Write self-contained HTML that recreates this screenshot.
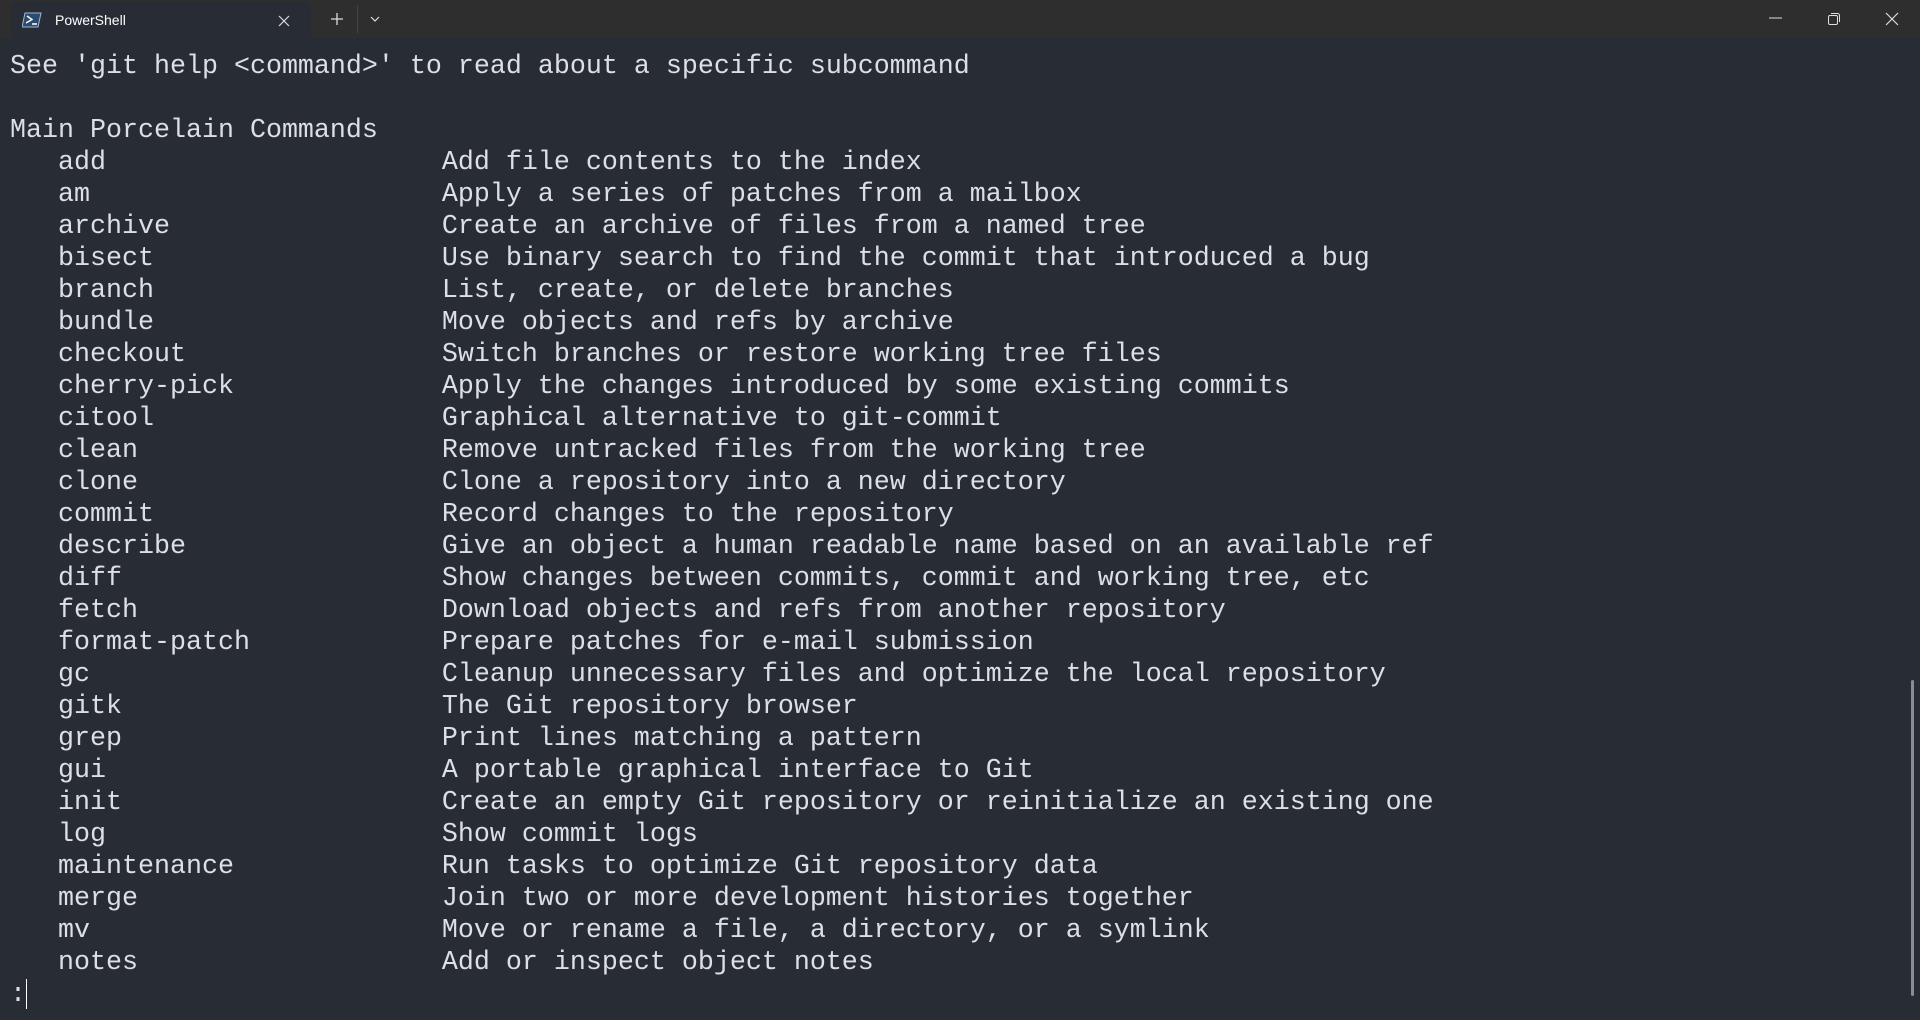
<!DOCTYPE html>
<html><head><meta charset="utf-8"><style>
html,body{margin:0;padding:0;width:1920px;height:1020px;overflow:hidden;background:#282c34;}
#bar{position:absolute;left:0;top:0;width:1920px;height:38px;background:#2e2e2e;}
#tab{position:absolute;left:11px;top:2px;width:300px;height:36px;background:#282c34;border-radius:8px 8px 0 0;}
#tab .t{position:absolute;left:44px;top:10px;font:14px "Liberation Sans",sans-serif;color:#fff;}
pre{position:absolute;left:10px;top:51px;margin:0;font-family:"Liberation Mono",monospace;font-size:26.67px;line-height:32px;color:#dcdfe4;}
#cur{position:absolute;left:26px;top:979px;width:1px;height:30px;background:#fff;}
#sb{position:absolute;left:1911px;top:680px;width:3px;height:316px;background:#8a8d93;border-radius:2px;}
svg{position:absolute;}
</style></head><body>
<div id="bar"></div>
<div id="tab">
<svg style="left:11px;top:10px" width="20" height="16" viewBox="0 0 20 16"><path d="M3 1h16l-3 14H0z" fill="#2b4a6e" stroke="#9fb8d8" stroke-width="1"/><path d="M5 4l5 3.5-6 3.5M10 12h5" stroke="#fff" stroke-width="1.4" fill="none"/></svg>
<span class="t">PowerShell</span>
<svg style="left:267px;top:13px" width="12" height="12" viewBox="0 0 12 12"><path d="M1 1l10 10M11 1L1 11" stroke="#ddd" stroke-width="1.2"/></svg>
</div>
<svg style="left:331px;top:13px" width="12" height="12" viewBox="0 0 12 12"><path d="M6 0v12M0 6h12" stroke="#ddd" stroke-width="1.3"/></svg>
<div style="position:absolute;left:357px;top:5px;width:1px;height:28px;background:#444"></div>
<svg style="left:370px;top:16px" width="10" height="6" viewBox="0 0 10 6"><path d="M1 1l4 4 4-4" stroke="#ddd" stroke-width="1.2" fill="none"/></svg>
<svg style="left:1769px;top:17px" width="13" height="2"><path d="M0 1h13" stroke="#ddd" stroke-width="1"/></svg>
<svg style="left:1827px;top:12px" width="14" height="14" viewBox="0 0 14 14"><rect x="1.5" y="3.5" width="9" height="9" rx="1.5" fill="none" stroke="#ddd"/><path d="M4 1.5h6.5a2 2 0 0 1 2 2V10" fill="none" stroke="#ddd"/></svg>
<svg style="left:1885px;top:12px" width="14" height="14" viewBox="0 0 14 14"><path d="M1 1l12 12M13 1L1 13" stroke="#ddd" stroke-width="1.2"/></svg>
<pre>See 'git help &lt;command&gt;' to read about a specific subcommand

Main Porcelain Commands
   add                     Add file contents to the index
   am                      Apply a series of patches from a mailbox
   archive                 Create an archive of files from a named tree
   bisect                  Use binary search to find the commit that introduced a bug
   branch                  List, create, or delete branches
   bundle                  Move objects and refs by archive
   checkout                Switch branches or restore working tree files
   cherry-pick             Apply the changes introduced by some existing commits
   citool                  Graphical alternative to git-commit
   clean                   Remove untracked files from the working tree
   clone                   Clone a repository into a new directory
   commit                  Record changes to the repository
   describe                Give an object a human readable name based on an available ref
   diff                    Show changes between commits, commit and working tree, etc
   fetch                   Download objects and refs from another repository
   format-patch            Prepare patches for e-mail submission
   gc                      Cleanup unnecessary files and optimize the local repository
   gitk                    The Git repository browser
   grep                    Print lines matching a pattern
   gui                     A portable graphical interface to Git
   init                    Create an empty Git repository or reinitialize an existing one
   log                     Show commit logs
   maintenance             Run tasks to optimize Git repository data
   merge                   Join two or more development histories together
   mv                      Move or rename a file, a directory, or a symlink
   notes                   Add or inspect object notes
:</pre>
<div id="cur"></div>
<div id="sb"></div>
</body></html>
